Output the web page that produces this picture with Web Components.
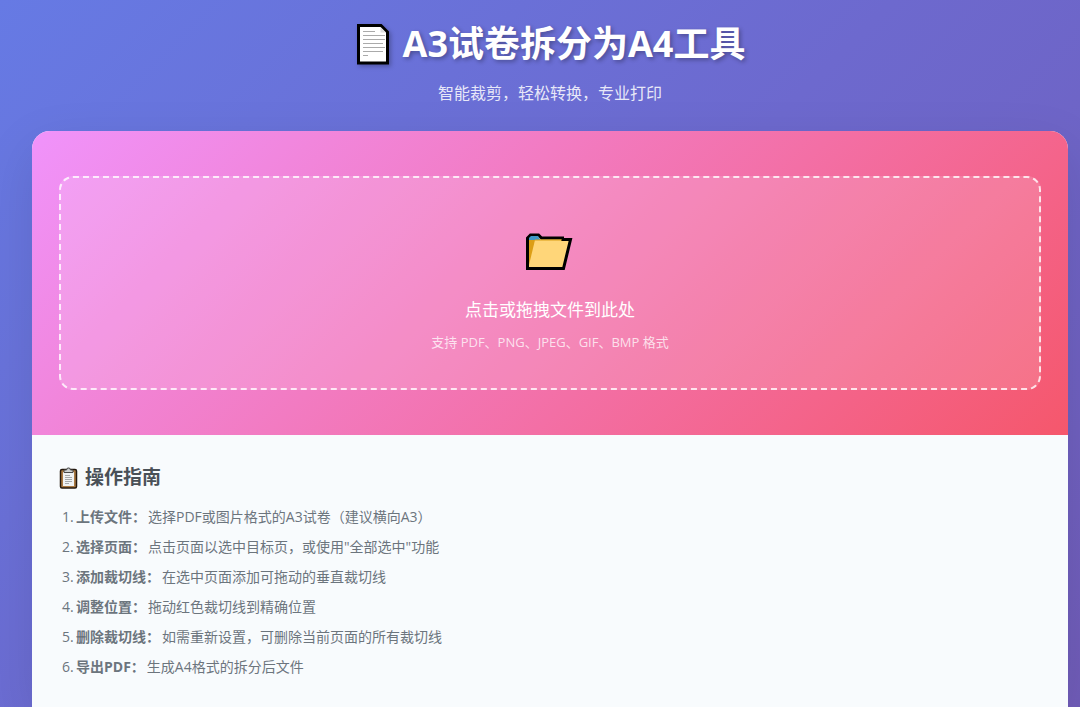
<!DOCTYPE html>
<html lang="zh-CN">
<head>
<meta charset="utf-8">
<meta name="viewport" content="width=device-width, initial-scale=1">
<title>A3试卷拆分为A4工具</title>
<style>
html { min-height: 100%; background: linear-gradient(135deg, #667ae4 0%, #6d69ce 50%, #705cb8 100%); }
body { margin: 0; font-family: "Open Sans", "Noto Sans CJK SC", sans-serif; }
</style>
</head>
<body>
<split-app></split-app>

<template id="app-tpl">
<style>
:host { display: block; box-sizing: border-box; min-height: 100vh; padding: 16px 12px 0 32px; }
main { border-radius: 18px 18px 0 0; overflow: hidden; background: #f8fbfd; box-shadow: 0 18px 54px rgba(0,0,0,.1); }
:host, main { display: flex; flex-direction: column; }
main { flex: 1; }
guide-panel { flex: 1; }
</style>
<page-header>A3试卷拆分为A4工具<span slot="sub">智能裁剪，轻松转换，专业打印</span></page-header>
<main>
<upload-panel>点击或拖拽文件到此处<span slot="hint">支持 PDF、PNG、JPEG、GIF、BMP 格式</span></upload-panel>
<guide-panel>
<guide-step label="上传文件：" num="1">选择PDF或图片格式的A3试卷（建议横向A3）</guide-step>
<guide-step label="选择页面：" num="2">点击页面以选中目标页，或使用"全部选中"功能</guide-step>
<guide-step label="添加裁切线：" num="3">在选中页面添加可拖动的垂直裁切线</guide-step>
<guide-step label="调整位置：" num="4">拖动红色裁切线到精确位置</guide-step>
<guide-step label="删除裁切线：" num="5">如需重新设置，可删除当前页面的所有裁切线</guide-step>
<guide-step label="导出PDF：" num="6">生成A4格式的拆分后文件</guide-step>
</guide-panel>
</main>
</template>

<template id="header-tpl">
<style>
:host { display: block; color: #fff; text-align: center; padding-bottom: 26px; }
h1 { display: flex; justify-content: center; align-items: center; gap: 12px; margin: 0 0 9px; font-size: 36px; line-height: 56px; font-weight: 700; text-shadow: 2px 2px 4px rgba(0,0,0,.3); }
svg { width: 36px; height: 44px; filter: drop-shadow(2px 2px 2px rgba(0,0,0,.25)); }
p { margin: 0; font-size: 16px; line-height: 24px; color: rgba(255,255,255,.86); }
</style>
<h1><svg viewBox="0 0 36 44" aria-hidden="true"><path d="M3.500 3.500h22.500l6.500 6.500v31H3.500z" fill="#fff" stroke="#000" stroke-width="3"/><path d="M25.500 5v5.500H31z" fill="#ddd"/><path d="M8 9.500h12M8 13.500h22M8 17.500h22M8 21.500h20M8 25.500h22M8 29.500h20M8 33.500h5" stroke="#aaa"/></svg><span><slot></slot></span></h1>
<p><slot name="sub"></slot></p>
</template>

<template id="upload-tpl">
<style>
:host { display: block; padding: 45px 27px; background: linear-gradient(135deg, #f093fb 0%, #f5576c 100%); }
button { display: flex; flex-direction: column; align-items: center; width: 100%; box-sizing: border-box; margin: 0; padding: 52px 20px 36px; border: 2px dashed rgba(255,255,255,.8); border-radius: 14px; background: rgba(255,255,255,.15); font: inherit; color: #fff; cursor: pointer; }
svg { width: 50px; height: 46px; margin-bottom: 20px; }
.title { font-size: 17px; line-height: 28px; }
.hint { margin-top: 8px; font-size: 13px; line-height: 20px; color: rgba(255,255,255,.76); }
</style>
<button type="button">
<svg viewBox="0 0 50 46" aria-hidden="true"><path d="M2.500 38.500V8l3-3h8l3 3h21v1.500h8l-7 29z" fill="#ffd679" stroke="#000" stroke-width="3"/><path d="M4 10V8l2-2h7l2.500 4z" fill="#3f97c5"/><path d="M4 10h6L4 35z" fill="#dc9e16"/><path d="M10 10h27" stroke="#dc9e16"/></svg>
<span class="title"><slot></slot></span>
<span class="hint"><slot name="hint"></slot></span>
</button>
</template>

<template id="guide-tpl">
<style>
:host { display: block; padding: 27px; }
h2 { display: flex; align-items: center; gap: 6px; margin: 0 0 9px; font-size: 19px; line-height: 31px; color: #495057; }
svg { width: 20px; height: 24px; }
div { display: flex; flex-direction: column; padding-left: 3px; }
</style>
<h2><svg viewBox="0 0 20 24" aria-hidden="true"><rect x="1.500" y="3.500" width="16" height="18.500" rx="1.500" fill="#aa7a43" stroke="#24180e" stroke-width="1.500"/><path d="M4 6h11v14H4z" fill="#f0f2f3"/><path d="M5 6.500V4h2.500l1-2h2l1 2H14v2.500z" fill="#ced1d2" stroke="#494949"/><path d="M6 9.500h5M6 11.500h7M6 13.500h7M6 15.500h7M6 17.500h4" stroke="#a5a8aa"/></svg>操作指南</h2>
<div role="list"><slot></slot></div>
</template>

<template id="step-tpl">
<style>
:host { display: block; font-size: 14px; line-height: 30px; color: #6c757d; }
.num { display: inline-block; width: 14px; }
strong { margin-right: 2px; }
</style>
<span class="num"></span><strong></strong><slot></slot>
</template>

<script>
const define = (name, tplId, setup) => customElements.define(name, class extends HTMLElement {
  connectedCallback() {
    if (this.shadowRoot) return;
    const root = this.attachShadow({ mode: "open" });
    root.append(document.getElementById(tplId).content.cloneNode(true));
    if (setup) setup(this, root);
  }
});
define("page-header", "header-tpl");
define("upload-panel", "upload-tpl");
define("guide-step", "step-tpl", (host, root) => {
  host.setAttribute("role", "listitem");
  root.querySelector(".num").textContent = host.getAttribute("num") + ".";
  root.querySelector("strong").textContent = host.getAttribute("label");
});
define("guide-panel", "guide-tpl");
define("split-app", "app-tpl");
</script>
</body>
</html>
